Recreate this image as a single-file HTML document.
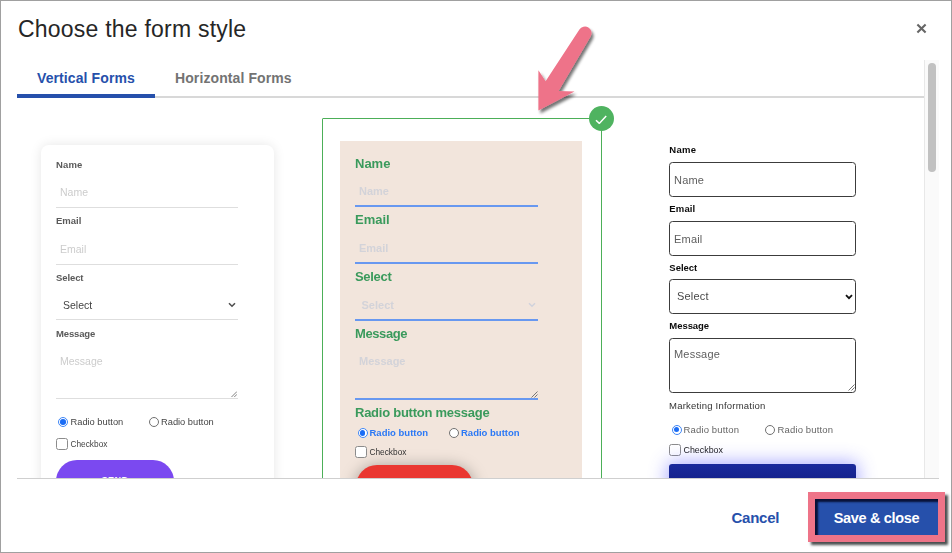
<!DOCTYPE html>
<html lang="en">
<head>
<meta charset="utf-8">
<title>Choose the form style</title>
<style>
*{box-sizing:border-box;margin:0;padding:0}
html,body{width:952px;height:553px;overflow:hidden;background:#fff}
body{font-family:"Liberation Sans",Arial,sans-serif;position:relative;color:#222}
.abs{position:absolute}
#frame{position:absolute;left:0;top:0;width:952px;height:553px;border:1px solid #a0a0a0;z-index:50;pointer-events:none}
#title{position:absolute;left:18px;top:14.7px;font-size:23px;line-height:28px;color:#262626;letter-spacing:.22px;white-space:nowrap}
#close{position:absolute;left:915.6px;top:22.6px;width:11px;height:11px}
#scroll{position:absolute;left:17px;top:60px;width:922px;height:418px;overflow:hidden}
#tabline{position:absolute;left:0;top:36px;width:907px;height:2px;background:#d8d8d8}
#tabactive{position:absolute;left:0;top:34px;width:138px;height:4px;background:#2650ab}
.tab{position:absolute;top:9px;font-weight:bold;font-size:14px;line-height:18px;white-space:nowrap;letter-spacing:.1px}
#tab1{left:20px;color:#2650ab}
#tab2{left:158px;color:#737373}
#track{position:absolute;left:907px;top:0;width:15px;height:418px;background:#fafafa;border-left:1px solid #e8e8e8}
#thumb{position:absolute;left:911px;top:3px;width:8px;height:109px;border-radius:4px;background:#c1c1c1}
#botline{position:absolute;left:17px;top:478px;width:922px;height:1px;background:#cfcfcf}
#cancel{position:absolute;left:731.5px;top:509.3px;font-weight:bold;font-size:15px;line-height:18px;color:#2650ab;white-space:nowrap;letter-spacing:-.25px}
#save{position:absolute;left:815px;top:499px;width:123px;height:36px;background:#2650ab;color:#fff;font-weight:bold;font-size:14.5px;line-height:38.6px;text-align:center;white-space:nowrap;letter-spacing:-.33px}
#hl{position:absolute;left:808px;top:492px;width:137px;height:50px;border:7px solid #ee7488;box-shadow:3px 3px 2.5px rgba(40,46,46,.85), inset 3px 3px 2px rgba(0,0,25,.8)}

#pg{position:absolute;left:-17px;top:-60px;width:952px;height:553px}
#pg div,#pg span{position:absolute;white-space:nowrap}
.l1,.p1,.t1,.l2,.p2,.t2,.l3,.p3,.t3{filter:blur(.3px)}
/* left card */
#c1{left:41px;top:145px;width:232.5px;height:400px;border-radius:8px;background:#fff;box-shadow:0 0 12px rgba(0,0,0,.10)}
.l1{left:56px;font-weight:bold;font-size:9.5px;line-height:12px;color:#5a5a5a;letter-spacing:.15px}
.p1{left:60px;font-size:10.5px;line-height:14px;color:#ccc}
.u1{left:56px;width:182px;height:1px;background:#dedede}
.t1{font-size:9px;line-height:12px;color:#444}
.radio{width:10px;height:10px;border-radius:50%;border:1px solid #707070;background:#fff;filter:blur(.3px)}
.radio.on{border-color:#3f86f5}
.radio.on:after{content:"";position:absolute;left:1.2px;top:1.2px;width:5.6px;height:5.6px;border-radius:50%;background:#1a6cf5}
.cb{width:12px;height:12px;border:1px solid #8c8c8c;border-radius:2.5px;background:#fff;margin-top:.4px;filter:blur(.3px)}
/* middle card */
#c2b{left:322px;top:118px;width:280px;height:420px;border:1px solid #4caf58;border-radius:1px}
#c2{left:340px;top:141px;width:242px;height:400px;background:#f2e5dc}
.l2{left:355px;font-weight:bold;font-size:13px;line-height:16px;color:#3a9a5c}
.p2{left:359px;font-weight:bold;font-size:11px;line-height:14px;color:#d3d3d9}
.u2{left:355px;width:183px;height:2px;background:#6898f0}
.t2{font-weight:bold;font-size:9.5px;line-height:12px;color:#2b78f5}
/* right card */
.l3{left:669.3px;font-weight:bold;font-size:9.5px;line-height:12px;color:#0a0a0a;letter-spacing:.3px;margin-top:.4px}
.b3{left:669px;width:187px;border:1px solid #3c3c3c;border-radius:3.5px;background:#fff}
.p3{left:674px;font-size:11px;line-height:14px;color:#5e5e5e;letter-spacing:.2px}
.t3{font-size:9.5px;line-height:12px;color:#666;letter-spacing:.15px}
</style>
</head>
<body>
<div id="title">Choose the form style</div>
<svg id="close" viewBox="0 0 11 11"><path d="M1.4 1.4 L9.6 9.6 M9.6 1.4 L1.4 9.6" stroke="#666" stroke-width="2.1" fill="none"/></svg>

<div id="scroll">
  <div id="tabline"></div>
  <div id="tabactive"></div>
  <div class="tab" id="tab1">Vertical Forms</div>
  <div class="tab" id="tab2">Horizontal Forms</div>
  <div id="pg">
    <!-- left card -->
    <div id="c1"></div>
    <div class="l1" style="top:158.7px">Name</div>
    <div class="p1" style="top:185px">Name</div>
    <div class="u1" style="top:207px"></div>
    <div class="l1" style="top:214.8px;letter-spacing:0">Email</div>
    <div class="p1" style="top:242px">Email</div>
    <div class="u1" style="top:264px"></div>
    <div class="l1" style="top:271.5px;letter-spacing:-.1px">Select</div>
    <div class="p1" style="top:298px;left:63px;color:#444;font-size:10.5px">Select</div>
    <svg class="abs" style="left:228px;top:302px" width="8" height="6" viewBox="0 0 8 6"><path d="M1 1.2 L4 4.2 L7 1.2" stroke="#505050" stroke-width="1.6" fill="none"/></svg>
    <div class="u1" style="top:319px"></div>
    <div class="l1" style="top:327.5px;letter-spacing:-.15px">Message</div>
    <div class="p1" style="top:354px">Message</div>
    <div class="u1" style="top:398px"></div>
    <svg class="abs" style="left:230.5px;top:391.2px" width="6.5" height="6.5" viewBox="0 0 7 7"><path d="M0.5 6.5 L6.5 0.5 M3.5 6.5 L6.5 3.5" stroke="#777" stroke-width="1" fill="none"/></svg>
    <div class="radio on" style="left:58px;top:417px"></div>
    <div class="t1" style="left:70.5px;top:416px;font-size:9.3px">Radio button</div>
    <div class="radio" style="left:149px;top:417px"></div>
    <div class="t1" style="left:161px;top:416px;font-size:9.3px">Radio button</div>
    <div class="cb" style="left:56px;top:438px"></div>
    <div class="t1" style="left:70.5px;top:438px;font-size:8.3px">Checkbox</div>
    <div style="left:56px;top:460px;width:118px;height:42px;border-radius:21px;background:#7b49f0;color:#fff;font-weight:bold;font-size:9px;line-height:41.2px;text-align:center;letter-spacing:.5px">SEND</div>

    <!-- middle card -->
    <div id="c2b"></div>
    <div id="c2"></div>
    <div class="l2" style="top:155.6px">Name</div>
    <div class="p2" style="top:184px">Name</div>
    <div class="u2" style="top:205px"></div>
    <div class="l2" style="top:211.8px">Email</div>
    <div class="p2" style="top:241px">Email</div>
    <div class="u2" style="top:262px"></div>
    <div class="l2" style="top:269.1px;letter-spacing:-.3px">Select</div>
    <div class="p2" style="top:298.2px;left:361.5px">Select</div>
    <svg class="abs" style="left:528px;top:302.3px" width="8" height="6" viewBox="0 0 8 6"><path d="M1 1.2 L4 4.2 L7 1.2" stroke="#d0d2dc" stroke-width="1.4" fill="none"/></svg>
    <div class="u2" style="top:319px"></div>
    <div class="l2" style="top:325.5px;letter-spacing:-.4px">Message</div>
    <div class="p2" style="top:354.2px">Message</div>
    <div class="u2" style="top:398px"></div>
    <svg class="abs" style="left:531px;top:391.3px" width="7" height="7" viewBox="0 0 7 7"><path d="M0.5 6.5 L6.5 0.5 M3.5 6.5 L6.5 3.5" stroke="#777" stroke-width="1" fill="none"/></svg>
    <div class="l2" style="top:405px;letter-spacing:-.25px">Radio button message</div>
    <div class="radio on" style="left:357.5px;top:428px"></div>
    <div class="t2" style="left:369.5px;top:427px">Radio button</div>
    <div class="radio" style="left:448.5px;top:428px"></div>
    <div class="t2" style="left:461px;top:427px">Radio button</div>
    <div class="cb" style="left:355px;top:446px"></div>
    <div class="t1" style="left:369.5px;top:446px;color:#333;font-size:8.3px">Checkbox</div>
    <div style="left:356px;top:464.8px;width:117px;height:42px;border-radius:21px;background:#ea3731;box-shadow:0 2px 16px rgba(0,0,0,.36)"></div>
    <div style="left:588.5px;top:106px;width:25px;height:25px;border-radius:50%;background:#4fb360"></div>
    <svg class="abs" style="left:594.5px;top:114px" width="12" height="10" viewBox="0 0 12 10"><path d="M1 6.2 L4.3 9.4 L11.2 1.9" stroke="#fff" stroke-width="1.5" fill="none"/></svg>

    <!-- right card -->
    <div class="l3" style="top:144px">Name</div>
    <div class="b3" style="top:162px;height:35px"></div>
    <div class="p3" style="top:173px">Name</div>
    <div class="l3" style="top:202.5px;letter-spacing:.15px">Email</div>
    <div class="b3" style="top:220.5px;height:35px"></div>
    <div class="p3" style="top:231.5px">Email</div>
    <div class="l3" style="top:261.3px;letter-spacing:0">Select</div>
    <div class="b3" style="top:279px;height:35px"></div>
    <div class="p3" style="top:289.3px;left:677px;color:#484848">Select</div>
    <svg class="abs" style="left:845px;top:294px" width="8" height="6" viewBox="0 0 8 6"><path d="M1 1.2 L4 4.2 L7 1.2" stroke="#111" stroke-width="1.8" fill="none"/></svg>
    <div class="l3" style="top:319.7px;letter-spacing:-.05px">Message</div>
    <div class="b3" style="top:338px;height:54.6px"></div>
    <div class="p3" style="top:347px">Message</div>
    <svg class="abs" style="left:848px;top:384px" width="7" height="7" viewBox="0 0 7 7"><path d="M0.5 6.5 L6.5 0.5 M3.5 6.5 L6.5 3.5" stroke="#777" stroke-width="1" fill="none"/></svg>
    <div class="t3" style="left:669px;top:400px;color:#333;letter-spacing:.22px">Marketing Information</div>
    <div class="radio on" style="left:671.5px;top:424.5px"></div>
    <div class="t3" style="left:683.5px;top:423.5px">Radio button</div>
    <div class="radio" style="left:764.5px;top:424.5px"></div>
    <div class="t3" style="left:777.5px;top:423.5px">Radio button</div>
    <div class="cb" style="left:669px;top:444px"></div>
    <div class="t3" style="left:683.5px;top:444px;color:#222;font-size:8.9px;letter-spacing:0">Checkbox</div>
    <div style="left:669px;top:464px;width:187px;height:40px;border-radius:3px;background:linear-gradient(#1a2a9c,#0c1672);box-shadow:0 0 18px 2px rgba(70,70,255,.45)"></div>
  </div>
  <div id="track"></div>
  <div id="thumb"></div>
</div>

<div id="botline"></div>
<div id="cancel">Cancel</div>
<div id="save">Save &amp; close</div>
<div id="hl"></div>
<svg class="abs" style="left:0;top:0;z-index:20" width="952" height="553" viewBox="0 0 952 553">
  <defs><filter id="ash" x="-30%" y="-30%" width="170%" height="170%"><feGaussianBlur in="SourceAlpha" stdDeviation="1.6"/><feOffset dx="1.5" dy="2.5" result="o"/><feComponentTransfer><feFuncA type="linear" slope=".55"/></feComponentTransfer><feMerge><feMergeNode/><feMergeNode in="SourceGraphic"/></feMerge></filter></defs>
  <path filter="url(#ash)" fill="#ee7389" d="M538.4 110.6 L538.4 70.3 L545.6 81.2 L579.4 29.6 A6.5 6.5 0 0 1 590.6 36.4 L558.6 90.9 L574.5 91.4 Z"/>
</svg>
<div id="frame"></div>
</body>
</html>
